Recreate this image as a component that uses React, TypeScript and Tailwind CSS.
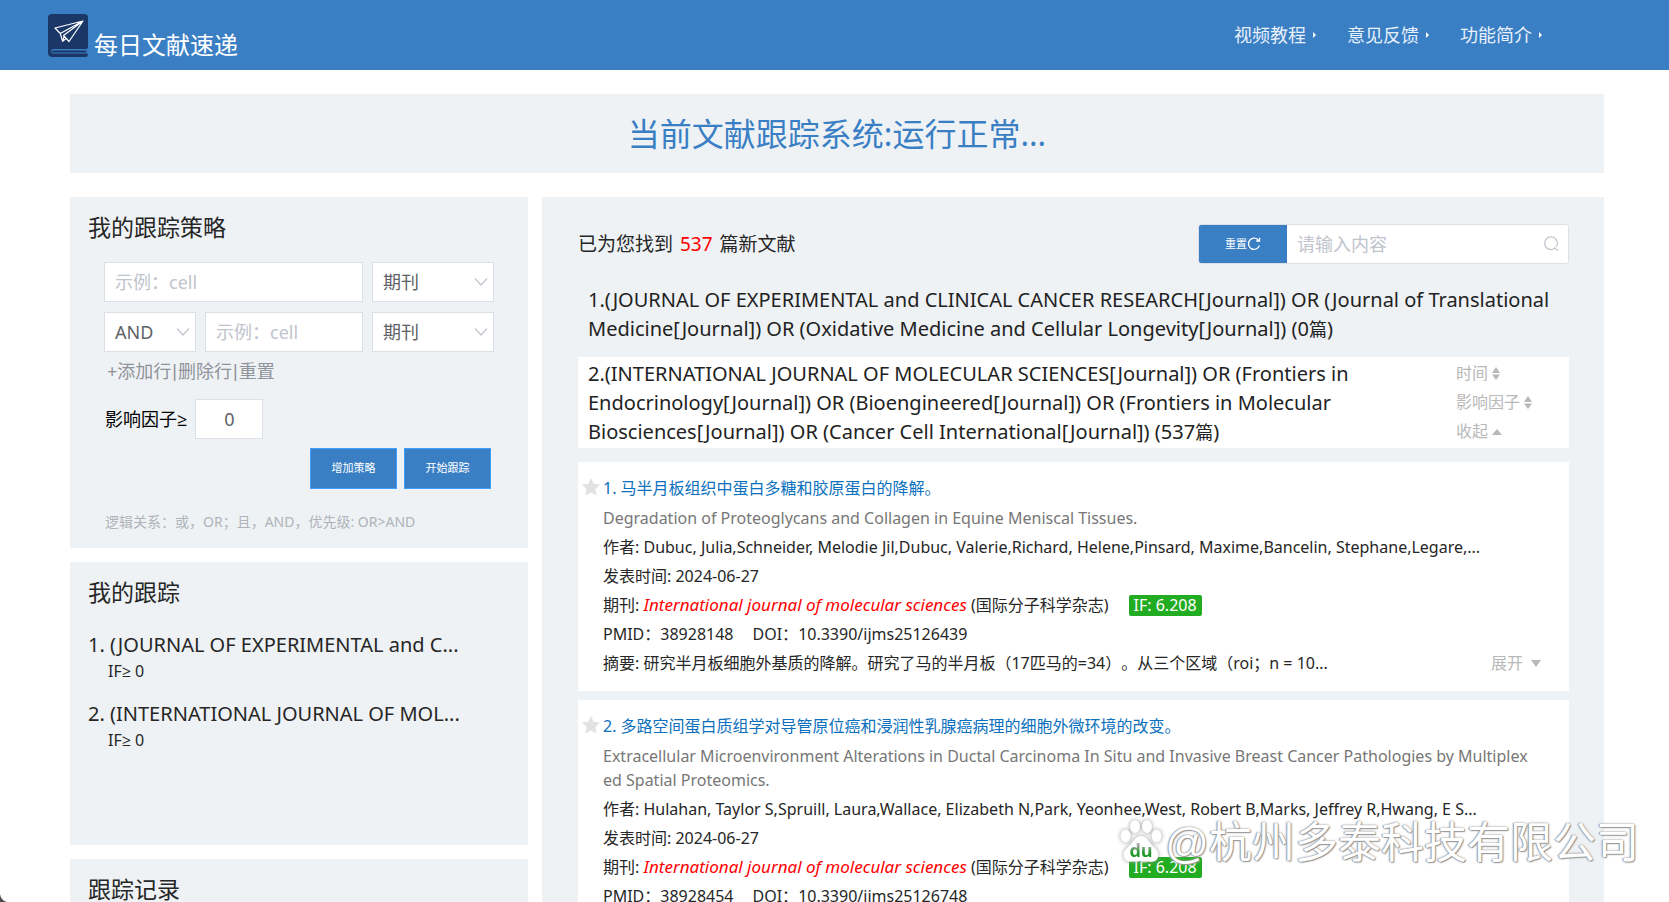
import type { ReactNode } from "react";

const strategies = [
  {
    text: "(JOURNAL OF EXPERIMENTAL and CLINICAL CANCER RESEARCH[Journal]) OR (Journal of Translational Medicine[Journal]) OR (Oxidative Medicine and Cellular Longevity[Journal])",
    short: "(JOURNAL OF EXPERIMENTAL and C...",
    count: 0,
    open: false,
  },
  {
    text: "(INTERNATIONAL JOURNAL OF MOLECULAR SCIENCES[Journal]) OR (Frontiers in Endocrinology[Journal]) OR (Bioengineered[Journal]) OR (Frontiers in Molecular Biosciences[Journal]) OR (Cancer Cell International[Journal])",
    short: "(INTERNATIONAL JOURNAL OF MOL...",
    count: 537,
    open: true,
  },
];

const articles = [
  {
    title: "马半月板组织中蛋白多糖和胶原蛋白的降解。",
    english: "Degradation of Proteoglycans and Collagen in Equine Meniscal Tissues.",
    authors:
      "Dubuc, Julia,Schneider, Melodie Jil,Dubuc, Valerie,Richard, Helene,Pinsard, Maxime,Bancelin, Stephane,Legare,...",
    date: "2024-06-27",
    factor: "6.208",
    pmid: "38928148",
    doi: "10.3390/ijms25126439",
    summary: "研究半月板细胞外基质的降解。研究了马的半月板（17匹马的=34）。从三个区域（roi；n = 10...",
  },
  {
    title: "多路空间蛋白质组学对导管原位癌和浸润性乳腺癌病理的细胞外微环境的改变。",
    english:
      "Extracellular Microenvironment Alterations in Ductal Carcinoma In Situ and Invasive Breast Cancer Pathologies by Multiplexed Spatial Proteomics.",
    authors:
      "Hulahan, Taylor S,Spruill, Laura,Wallace, Elizabeth N,Park, Yeonhee,West, Robert B,Marks, Jeffrey R,Hwang, E S...",
    date: "2024-06-27",
    factor: "6.208",
    pmid: "38928454",
    doi: "10.3390/ijms25126748",
    summary: "",
  },
];

function Logo() {
  return (
    <svg width="40" height="43" viewBox="0 0 40 43" aria-hidden="true">
      <path
        d="M4 0H36.500Q40 0 40 3.500V33Q40 35 38 35H5.500Q3.200 35 3.200 37Q3.200 39.500 5.500 39.500H39.800V41Q39.800 43 38 43H4.500Q0 43 0 38.500V4Q0 0 4 0Z"
        fill="#1b3767"
      />
      <path d="M5 37.400H37.500" stroke="#1b3767" strokeWidth="2" strokeLinecap="round" />
      <path
        d="M35 7L7 14L12.300 19.500ZM35 7L12.300 19.500L14.600 27.300L16.200 21.800M35 7L15.500 21.500L21 27.500ZM14.600 27.300L18 24.600"
        fill="none"
        stroke="#fff"
        strokeWidth="1.200"
        strokeLinejoin="round"
      />
    </svg>
  );
}

function Chevron() {
  return (
    <svg
      className="pointer-events-none absolute top-1/2 right-1.5 -translate-y-1/2"
      width="14"
      height="9"
      viewBox="0 0 14 9"
      aria-hidden="true"
    >
      <path d="M1 1L7 7.500L13 1" fill="none" stroke="#c0c4cc" strokeWidth="1.200" />
    </svg>
  );
}

function Dropdown({ label, options, className }: { label: string; options: string[]; className: string }) {
  return (
    <div className={`relative ${className}`}>
      <select
        aria-label={label}
        className="h-10 w-full appearance-none border border-[#dcdfe6] bg-white pl-[10px] text-[18px] text-[#606266] outline-none"
      >
        {options.map((o) => (
          <option key={o}>{o}</option>
        ))}
      </select>
      <Chevron />
    </div>
  );
}

function TermInput({ label }: { label: string }) {
  return (
    <input
      type="text"
      aria-label={label}
      placeholder="示例：cell"
      className="h-10 min-w-0 flex-1 border border-[#dcdfe6] bg-white px-[10px] text-[18px] text-[#606266] outline-none placeholder:text-[#c0c4cc]"
    />
  );
}

function Panel({ title, children, className = "" }: { title: string; children?: ReactNode; className?: string }) {
  return (
    <section className={`bg-[#eef2f5] ${className}`}>
      <h2 className="px-[18px] pt-[14px] text-[23px] leading-8 text-[#262626]">{title}</h2>
      {children}
    </section>
  );
}

function Bar() {
  return <span className="px-px font-['Liberation_Sans',sans-serif]">|</span>;
}

function SortIcon() {
  return (
    <svg width="8" height="13" viewBox="0 0 8 13" fill="#b8b8b8" aria-hidden="true">
      <path d="M4 0L8 6H0ZM0 7.500H8L4 13Z" />
    </svg>
  );
}

function Article({ index, item }: { index: number; item: (typeof articles)[number] }) {
  return (
    <article className="flex bg-white pt-3 pr-7 pb-[13px] pl-1 text-[16px] leading-[29px] text-[#262626]">
      <button type="button" aria-label="收藏" className="mt-1 h-[18px] w-[21px] shrink-0">
        <svg width="18" height="18" viewBox="0 0 18 18" aria-hidden="true">
          <path
            d="M9 0L11.700 5.800L18 6.600L13.400 11L14.600 17.500L9 14.400L3.400 17.500L4.600 11L0 6.600L6.300 5.800Z"
            fill="#e2e2e2"
          />
        </svg>
      </button>
      <div className="min-w-0 flex-1">
        <h3>
          <a href="#" className="text-[#0b70bd]">
            {index}. {item.title}
          </a>
        </h3>
        <p className="py-[3px] pr-2 leading-6 break-all text-[#777]">{item.english}</p>
        <p className="truncate">作者: {item.authors}</p>
        <p>发表时间: {item.date}</p>
        <p className="flex items-center">
          <span>
            期刊: <em className="text-[17px] leading-none text-[#f00]">International journal of molecular sciences</em>{" "}
            (国际分子科学杂志)
          </span>
          <span className="ml-5 rounded-[2px] bg-[#22ac22] px-[5px] text-[16px] leading-[21px] text-white">
            IF: {item.factor}
          </span>
        </p>
        <p className="flex gap-[19px]">
          <span>PMID：{item.pmid}</span>
          <span>DOI：{item.doi}</span>
        </p>
        <div className="flex justify-between">
          <p className="[text-spacing-trim:space-all]">摘要: {item.summary}</p>
          <button type="button" className="flex items-center gap-2 text-[#b8b8b8]">
            展开
            <svg width="10" height="7" viewBox="0 0 10 7" fill="#b8b8b8" aria-hidden="true">
              <path d="M0 0H10L5 7Z" />
            </svg>
          </button>
        </div>
      </div>
    </article>
  );
}

function Watermark() {
  return (
    <div className="pointer-events-none absolute right-[30px] bottom-[30px] flex items-center gap-[3px]">
      <svg width="42" height="46" viewBox="0 0 42 46" className="overflow-visible drop-shadow-[0_0_2px_#999]" aria-hidden="true">
        <defs>
          <linearGradient id="mark" x1="0" y1="0" x2="0" y2="1">
            <stop offset="0.300" stopColor="#a9a9a9" />
            <stop offset="0.600" stopColor="#22982a" />
          </linearGradient>
        </defs>
        <g fill="#fff">
          <ellipse cx="5.500" cy="17" rx="5" ry="6.500" />
          <ellipse cx="15" cy="7.500" rx="5" ry="6.500" />
          <ellipse cx="27" cy="7.500" rx="5" ry="6.500" />
          <ellipse cx="36.500" cy="17" rx="5" ry="6.500" />
          <path d="M21 17C15 17 13.500 23 9 27C4 31.500 3 34 4 38C5.500 43.500 11 43 16 42.300Q21 41.700 26 42.300C31 43 36.500 43.500 38 38C39 34 38 31.500 33 27C28.500 23 27 17 21 17Z" />
        </g>
        <text x="21" y="38" textAnchor="middle" fontSize="18" fontWeight="700" fontFamily="Open Sans, sans-serif" fill="url(#mark)">
          du
        </text>
      </svg>
      <span className="text-[43px] leading-[60px] text-white [text-shadow:0_0_1px_#888,1px_1px_1px_#999,-1px_0_1px_#aaa,0_0_3px_#bbb]">
        <span className="font-['Liberation_Sans',sans-serif] leading-none">@</span>杭州多泰科技有限公司
      </span>
    </div>
  );
}

export default function App() {
  return (
    <div className="relative h-screen overflow-hidden bg-white font-['Noto_Sans','Open_Sans','Noto_Sans_CJK_SC',sans-serif]">
      <header className="flex h-[70px] items-center justify-between bg-[#3a7fc4] pr-[127px] pl-12">
        <div className="flex items-end gap-[6px]">
          <Logo />
          <span className="text-[24px] leading-6 text-white">每日文献速递</span>
        </div>
        <nav className="flex gap-[31px]">
          {["视频教程", "意见反馈", "功能简介"].map((n) => (
            <a key={n} href="#" className="flex items-center gap-[7px] text-[18px] text-[#e8f1fb]">
              {n}
              <svg width="3" height="6" viewBox="0 0 3 6" fill="#fff" aria-hidden="true">
                <path d="M0 0L3 3L0 6Z" />
              </svg>
            </a>
          ))}
        </nav>
      </header>

      <main className="mt-6 mr-[65px] ml-[70px]">
        <h1 className="bg-[#eef2f5] text-center text-[32px] leading-[79px] text-[#3a7fc4]">
          当前文献跟踪系统:运行正常...
        </h1>

        <div className="mt-6 grid grid-cols-[minmax(0,458fr)_minmax(0,1062fr)] gap-[14px]">
          <div className="flex flex-col gap-[14px]">
            <Panel title="我的跟踪策略" className="pb-4">
              <form className="mt-[19px] px-[34px]">
                <div className="flex gap-[9px]">
                  <TermInput label="检索词 1" />
                  <Dropdown label="字段 1" options={["期刊", "标题"]} className="w-[122px]" />
                </div>
                <div className="mt-[10px] flex gap-[9px]">
                  <Dropdown label="逻辑" options={["AND", "OR"]} className="w-[92px]" />
                  <TermInput label="检索词 2" />
                  <Dropdown label="字段 2" options={["期刊", "标题"]} className="w-[122px]" />
                </div>
                <div className="flex h-[38px] items-center pl-[3px] text-[18px] text-[#909399]">
                  <button type="button">+添加行</button>
                  <Bar />
                  <button type="button">删除行</button>
                  <Bar />
                  <button type="button">重置</button>
                </div>
                <div className="mt-[9px] flex items-center gap-2 pl-px text-[18px] text-black">
                  <label htmlFor="factor">影响因子≥</label>
                  <input
                    id="factor"
                    type="text"
                    defaultValue="0"
                    className="h-10 w-[68px] border border-[#dcdfe6] bg-white text-center text-[18px] text-[#606266] outline-none"
                  />
                </div>
                <div className="mt-[9px] flex justify-end gap-[7px] pr-[3px] text-[11px] text-white">
                  <button type="button" className="h-[41px] w-[87px] border border-[#409eff] bg-[#3a7fc4]">
                    增加策略
                  </button>
                  <button type="button" className="h-[41px] w-[87px] border border-[#409eff] bg-[#3a7fc4]">
                    开始跟踪
                  </button>
                </div>
                <p className="mt-[23px] pl-px text-[14px] leading-5 text-[#b0b3b8]">
                  逻辑关系：或，OR；且，AND，优先级: OR&gt;AND
                </p>
              </form>
            </Panel>

            <Panel title="我的跟踪" className="min-h-[283px]">
              <ul className="mt-[22px] flex flex-col gap-4 px-[18px] text-[#262626]">
                {strategies.map((s, i) => (
                  <li key={s.short}>
                    <p className="text-[20px] leading-[29px]">
                      {i + 1}. {s.short}
                    </p>
                    <p className="pl-5 text-[16px] leading-6">IF≥ 0</p>
                  </li>
                ))}
              </ul>
            </Panel>

            <Panel title="跟踪记录" className="min-h-[283px]" />
          </div>

          <section className="bg-[#eef2f5] pt-[27px] pr-[35px] pb-6 pl-9">
            <div className="flex items-center justify-between">
              <p className="text-[19px] text-[#262626]">
                已为您找到 <span className="px-[2px] text-[#f00]">537</span> 篇新文献
              </p>
              <div className="flex h-10 w-[371px] overflow-hidden rounded-[3px] border border-[#dcdfe6] bg-white">
                <button
                  type="button"
                  className="flex w-[88px] items-center justify-center bg-[#3a7fc4] text-[11px] text-white"
                >
                  重置
                  <svg width="14" height="14" viewBox="0 0 14 14" fill="none" stroke="#fff" strokeWidth="1.300" aria-hidden="true">
                    <path d="M12.400 8.500A5.600 5.600 0 1 1 11.600 3.500M12.600 0.800V4H9.300" />
                  </svg>
                </button>
                <input
                  type="text"
                  aria-label="搜索"
                  placeholder="请输入内容"
                  className="min-w-0 flex-1 px-[10px] text-[18px] outline-none placeholder:text-[#c0c4cc]"
                />
                <button type="button" aria-label="搜索" className="pr-[9px]">
                  <svg width="16" height="16" viewBox="0 0 16 16" fill="none" stroke="#c0c4cc" strokeWidth="1.200" aria-hidden="true">
                    <path d="M11.800 12.200A6.300 6.300 0 1 1 13 11M11.300 11.300L14.800 14.800" />
                  </svg>
                </button>
              </div>
            </div>

            <div className="mt-[19px] flex flex-col gap-3 text-[20px] leading-[29px] text-[#222]">
              {strategies.map((s, i) => (
                <div
                  key={s.short}
                  className={s.open ? "flex justify-between bg-white py-[2px] pl-[10px]" : "py-[2px] pl-[10px]"}
                >
                  <p className={s.open ? "max-w-[800px]" : ""}>
                    {i + 1}.{s.text} ({s.count}
                    <span className="text-[18px] leading-none">篇</span>)
                  </p>
                  {s.open && (
                    <div className="flex w-[113px] shrink-0 flex-col items-start text-[16px] text-[#b8b8b8]">
                      <button type="button" className="flex items-center gap-1">
                        时间 <SortIcon />
                      </button>
                      <button type="button" className="flex items-center gap-1">
                        影响因子 <SortIcon />
                      </button>
                      <button type="button" className="flex items-center gap-1">
                        收起
                        <svg width="10" height="6" viewBox="0 0 10 6" fill="#b8b8b8" aria-hidden="true">
                          <path d="M5 0L10 6H0Z" />
                        </svg>
                      </button>
                    </div>
                  )}
                </div>
              ))}
            </div>

            <div className="mt-[14px] flex flex-col gap-[9px]">
              {articles.map((a, i) => (
                <Article key={a.pmid} index={i + 1} item={a} />
              ))}
            </div>
          </section>
        </div>
      </main>

      <Watermark />
      <svg className="absolute bottom-0 left-0" width="7" height="8" viewBox="0 0 7 8" fill="#4a4a4a" aria-hidden="true">
        <path d="M0 0Q0.800 6.500 7 8H0Z" />
      </svg>
    </div>
  );
}
